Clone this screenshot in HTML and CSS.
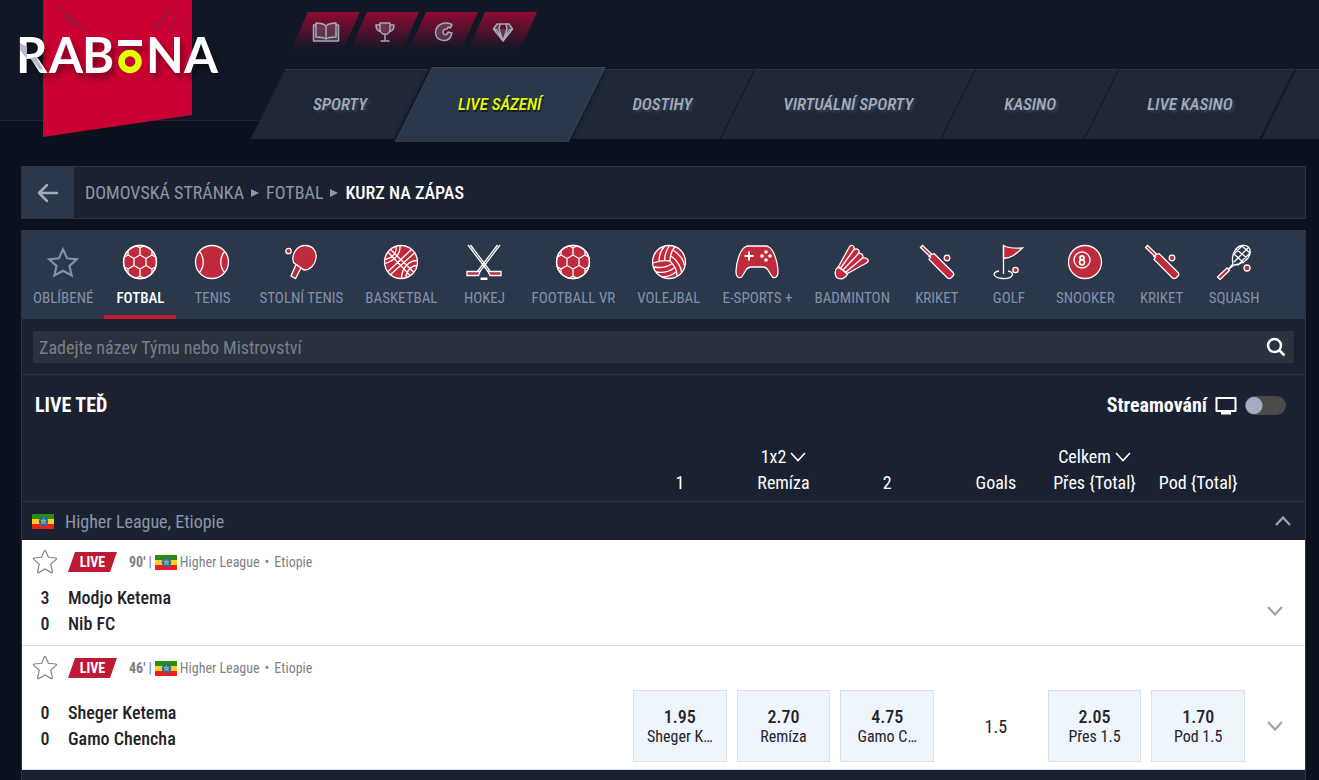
FILE: index.html
```html
<!DOCTYPE html>
<html lang="cs">
<head>
<meta charset="utf-8">
<meta name="viewport" content="width=device-width, initial-scale=1">
<title>Rabona – Live sázení</title>
<link rel="stylesheet" href="styles.css">
</head>
<body>
<svg class="sprite" aria-hidden="true">
  <symbol id="i-football" viewBox="0 0 36 36">
    <clipPath id="ball"><circle cx="18" cy="18" r="16.5"/></clipPath>
    <circle class="f" cx="18" cy="18" r="16.5"/>
    <path clip-path="url(#ball)" d="M18 11l6 3.500v7l-6 3.500-6-3.500v-7zM12 14.500L6 11V4l6-3.500L18 4v7M18 4l6-3.500L30 4v7l-6 3.500M30 11l6 3.500v7L30 25l-6-3.500M6 11l-6 3.500v7L6 25l6-3.500M6 25v7l6 3.500 6-3.500v-7M18 32l6 3.500 6-3.500v-7"/>
    <circle cx="18" cy="18" r="16.500"/>
  </symbol>
  <symbol id="i-tennis" viewBox="0 0 36 36">
    <circle class="f" cx="18" cy="18" r="16.500"/>
    <path d="M5.500 7.500c5 6 5 15 0 21M30.500 7.500c-5 6-5 15 0 21"/>
  </symbol>
  <symbol id="i-table" viewBox="0 0 36 36">
    <path class="f" d="M10.500 18.500C8 10 14 1.500 22 1.500c8 0 12 6 11 13C32 21 27 26 21 26zM13 20.500l5 3.500L12.500 34.500l-4.500-2.500z"/>
    <circle class="f" cx="5.500" cy="7" r="2.700"/>
  </symbol>
  <symbol id="i-basket" viewBox="0 0 36 36">
    <circle class="f" cx="18" cy="18" r="16.500"/>
    <path d="M5 8l22.500 24M7.500 5.500L31 28.500M31.500 9L7 31M28.500 5.500L4.500 28M13 2.500c1 6-3 11-11 13M17 1.500c1 8-5 15-15 18M34.500 16.500c-9 0-16 8-16 18M34 21.500c-6 0-11 6-11 12"/>
  </symbol>
  <symbol id="i-hockey" viewBox="0 0 36 36">
    <path d="M2 1l20 26.500M4.500 1L24 27M34 1L12 30M31.500 1L11 28"/>
    <path class="f" d="M22 27.500h13v4H24zM14 27.500H1v4h11.500z"/>
    <path class="p" d="M14.500 33.500h7V36h-7z"/>
  </symbol>
  <symbol id="i-volley" viewBox="0 0 36 36">
    <circle class="f" cx="18" cy="18" r="16.500"/>
    <path d="M19 17C19 11 21 6 24 2.500M13.500 17c0-6 2-11 5-15.500M8 18C8 11 11 5 13.500 2.500M2 19c6-2 12-3 17-2M19 17c4 4 7 10 7 15M20 12c6 4 10 11 10.500 16M22.500 6.500c6 4 10 9 11 15M2.500 23c6 1 12 1 18-3M5 28c7 1 13 0 18-4M11 33c6 0 10-2 14-5"/>
  </symbol>
  <symbol id="i-pad" viewBox="0 0 44 36">
    <path class="f" d="M10 3q1.500-1 3.500-1h17q2 0 3.500 1c5 3 9 16 9 24 0 8-5 8-7 4l-3-5c-2-3-3-3-5-3H16c-2 0-3 0-5 3l-3 5c-2 4-7 4-7-4C1 19 5 6 10 3z"/>
    <path class="w" d="M14 7.500v9M9.500 12h9"/>
    <circle class="p" cx="31" cy="8" r="1.800"/><circle class="p" cx="31" cy="16" r="1.800"/><circle class="p" cx="27" cy="12" r="1.800"/><circle class="p" cx="35" cy="12" r="1.800"/>
  </symbol>
  <symbol id="i-badminton" viewBox="0 0 36 36">
    <path class="f" d="M4.500 22.500L15 3.500c2-4 6-2 5 2 4-1.500 6 1 4.500 4 4-.5 5 2 4 4.500 5-1 7.500 3 4 5L13.500 29.500zM7 23.500L20 5.500M9.500 25.500l15-16M12 28l16.500-14"/>
    <path class="f" d="M4 23c-4 3-3 8-1.500 10.500C7 36.500 12 34 13.500 30zM4 23l9.500 7"/>
  </symbol>
  <symbol id="i-cricket" viewBox="0 0 36 36">
    <path class="f" d="M1.500 3.500l2-2 9.500 9 2-1L34 28.500q1.500 2 0 3.500l-2 2q-2 1-3.500 0L10 15.500l1.500-2.500z"/>
    <path d="M9.500 13l3-3"/>
    <circle class="f" cx="28" cy="14" r="2.800"/>
  </symbol>
  <symbol id="i-golf" viewBox="0 0 36 36">
    <path class="f" d="M12.500 1.500c5 3 11 3 19 2.500-5 4-9 10-19 10.500z"/>
    <path d="M12.500 1v29M8 27c-7 1-7 7 4 7.500 11 .5 12-6.500 5-7.500"/>
    <circle class="f" cx="24.500" cy="26" r="2.700"/>
  </symbol>
  <symbol id="i-snooker" viewBox="0 0 36 36">
    <circle class="f" cx="18" cy="18" r="16.500"/><circle cx="15" cy="16" r="8"/>
    <g stroke-width="1.700"><circle cx="15" cy="13.800" r="2"/><circle cx="15" cy="18.300" r="2.500"/></g>
  </symbol>
  <symbol id="i-squash" viewBox="0 0 36 36">
    <path d="M17 20c-2-9 2-17 9-18.500 6-1 9 3 8 8-1.500 7-9 11-16 11.500l-5 4M17 20l-4.500 5M18 10l10 9M20 5l12 10M26 2l8 7M32 4L18 18M26 2l-9 9M34 9L22 21"/>
    <path class="f" d="M11 24l2.500 2.500-9.500 9L1.500 33z"/><circle class="f" cx="31" cy="24" r="3"/>
  </symbol>
  <symbol id="i-star" viewBox="0 0 32 30">
    <path d="M16 3l3.800 8.500 9.200 1-6.900 6.200 2 9L16 23.200 7.900 27.700l2-9L3 12.500l9.200-1z"/>
  </symbol>
  <symbol id="i-starline" viewBox="0 0 26 26">
    <path d="M13 1.700q.8 0 1.100.9l2.300 5.700 7.300.7q1.400.3.500 1.400l-5.500 4.800 1.700 7.500q.1 1.500-1.200.9L13 19.900l-6.200 3.700q-1.300.6-1.200-.9l1.700-7.500-5.500-4.800Q.9 9.300 2.300 9l7.300-.7 2.300-5.700q.3-.9 1.100-.9z"/>
  </symbol>
  <symbol id="i-down" viewBox="0 0 16 10"><path d="M1 1l7 7.500L15 1"/></symbol>
  <symbol id="i-flag" viewBox="0 0 22 15">
    <path fill="#2c8c0c" d="M0 0h22v5H0z"/><path fill="#ffcf20" d="M0 5h22v5H0z"/><path fill="#f01f1c" d="M0 10h22v5H0z"/>
    <circle cx="11.500" cy="7.500" r="4.700" fill="#1b6cc0"/>
    <path d="M11.500 4.500l1.800 5.500-4.500-3.400h5.400L9.700 10z" fill="none" stroke="#e2cf42" stroke-width=".6"/>
  </symbol>
</svg>

<header class="header">
  <a class="logo" href="#" aria-label="Rabona">
    <svg width="240" height="140" viewBox="0 0 240 140">
      <path d="M43 0h149v115L43 137z" fill="#cb0032"/>
      <path d="M54 0l35 33-21-10zM51 10l15 24-8-13zM176 0l-25 31 8-2zM181 0l-15 38 8-12zM183 15l-3 25 3-10z" fill="#a3133b"/>
      <g class="logo-text">
        <text x="16" y="73">R</text><text x="49" y="73">A</text><text x="82" y="73">B</text>
        <text x="146" y="73">N</text><text x="184" y="73">A</text>
        <path d="M118 40h24v6h-24z"/>
      </g>
      <path d="M20 43l7 4v12l-7-9z" fill="#b9bcc8"/>
      <path d="M30 58l6-1 7 12-3 1z" fill="#b9bcc8"/>
      <circle cx="130" cy="61.500" r="8.500" fill="none" stroke="#e3ff00" stroke-width="6.500"/>
    </svg>
  </a>
  <div class="header-main">
    <div class="quick">
      <a href="#" aria-label="Pravidla"><svg width="28" height="22" viewBox="0 0 28 22"><path d="M4 4H1.500v16h25V4H24M14 5c-3-3-6-3-10-3v14c4 0 7 0 10 2 3-2 6-2 10-2V2c-4 0-7 0-10 3zM14 5v13"/></svg></a>
      <a href="#" aria-label="Turnaje"><svg width="22" height="22" viewBox="0 0 22 22"><path d="M6 2h10v6c0 7-10 7-10 0zM6 4H2c0 4 1 6 4.500 6.500M16 4h4c0 4-1 6-4.500 6.500M11 13.500V20M6.500 20h9"/></svg></a>
      <a href="#" aria-label="Bonusy"><svg width="22" height="22" viewBox="0 0 22 22"><path d="M18 3C11 0 3 4 2.500 11c0 9 11 11 15 5l1.500-4-4-1c-1 4-5 3-5 0 0-2 2-3 4-3l1-2 2 1 2-3z"/></svg></a>
      <a href="#" aria-label="VIP"><svg width="22" height="22" viewBox="0 0 22 22"><path d="M5 3h12l3.500 5L11 20 1.500 8zM8 3l-1 5 4 12 4-12-1-5M1.500 8L5 9 11 20l6-11 3.500-1"/></svg></a>
    </div>
    <nav class="nav" aria-label="Hlavní">
      <a href="#"><span>SPORTY</span></a>
      <a href="#" class="active" aria-current="page"><span>LIVE SÁZENÍ</span></a>
      <a href="#"><span>DOSTIHY</span></a>
      <a href="#"><span>VIRTUÁLNÍ SPORTY</span></a>
      <a href="#"><span>KASINO</span></a>
      <a href="#"><span>LIVE KASINO</span></a>
      <i class="nav-rest"></i>
    </nav>
  </div>
</header>

<main class="main">
  <div class="crumbs">
    <button class="back" aria-label="Zpět"><svg width="22" height="20" viewBox="0 0 22 20"><path d="M10 2l-8 8 8 8M2 10h18"/></svg></button>
    <nav class="crumb-list" aria-label="Drobečková navigace">
      <a href="#">DOMOVSKÁ STRÁNKA</a><i class="tri"></i><a href="#">FOTBAL</a><i class="tri"></i><strong>KURZ NA ZÁPAS</strong>
    </nav>
  </div>

  <section class="panel">
    <nav class="sports" aria-label="Sporty">
      <a href="#"><svg class="ic fav"><use href="#i-star"/></svg>OBLÍBENÉ</a>
      <a href="#" class="on"><svg class="ic"><use href="#i-football"/></svg>FOTBAL</a>
      <a href="#"><svg class="ic"><use href="#i-tennis"/></svg>TENIS</a>
      <a href="#"><svg class="ic"><use href="#i-table"/></svg>STOLNÍ TENIS</a>
      <a href="#"><svg class="ic"><use href="#i-basket"/></svg>BASKETBAL</a>
      <a href="#"><svg class="ic"><use href="#i-hockey"/></svg>HOKEJ</a>
      <a href="#"><svg class="ic"><use href="#i-football"/></svg>FOOTBALL VR</a>
      <a href="#"><svg class="ic"><use href="#i-volley"/></svg>VOLEJBAL</a>
      <a href="#"><svg class="ic wide"><use href="#i-pad"/></svg>E-SPORTS +</a>
      <a href="#"><svg class="ic"><use href="#i-badminton"/></svg>BADMINTON</a>
      <a href="#"><svg class="ic"><use href="#i-cricket"/></svg>KRIKET</a>
      <a href="#"><svg class="ic"><use href="#i-golf"/></svg>GOLF</a>
      <a href="#"><svg class="ic"><use href="#i-snooker"/></svg>SNOOKER</a>
      <a href="#"><svg class="ic"><use href="#i-cricket"/></svg>KRIKET</a>
      <a href="#"><svg class="ic"><use href="#i-squash"/></svg>SQUASH</a>
    </nav>
    <form class="search">
      <input type="text" aria-label="Hledat" placeholder="Zadejte název Týmu nebo Mistrovství">
      <button type="button" aria-label="Hledat"><svg width="20" height="20" viewBox="0 0 20 20"><circle cx="8.500" cy="8.500" r="6.500"/><path d="M13.500 13.500L18.500 18.500"/></svg></button>
    </form>

    <div class="title">
      <h1>LIVE TEĎ</h1>
      <label class="stream">Streamování
        <svg width="22" height="19" viewBox="0 0 22 19"><path d="M1.500 2h19v13h-19z"/><path d="M6 15h10v3.500H6z" class="p"/></svg>
        <input type="checkbox" role="switch">
      </label>
    </div>

    <div class="row cols">
      <div></div>
      <div class="odds heads">
        <span class="c2"><button>1x2 <svg class="dn"><use href="#i-down"/></svg></button></span>
        <span class="c5"><button>Celkem <svg class="dn"><use href="#i-down"/></svg></button></span>
        <span class="c1">1</span><span>Remíza</span><span>2</span><span class="goals">Goals</span><span>Přes {Total}</span><span>Pod {Total}</span>
      </div>
    </div>

    <div class="league">
      <svg class="flag"><use href="#i-flag"/></svg>
      <h2>Higher League, Etiopie</h2>
      <button aria-label="Sbalit"><svg class="chev up"><use href="#i-down"/></svg></button>
    </div>

    <article class="match">
      <div class="meta">
        <button class="star" aria-label="Přidat k oblíbeným"><svg><use href="#i-starline"/></svg></button>
        <span class="live">LIVE</span>
        <span class="info"><b>90'</b> | <svg class="flag"><use href="#i-flag"/></svg> Higher League <span class="dot">•</span> Etiopie</span>
      </div>
      <div class="row">
        <div class="teams"><b>3</b><strong>Modjo Ketema</strong><b>0</b><strong>Nib FC</strong></div>
        <button class="more" aria-label="Více"><svg class="chev"><use href="#i-down"/></svg></button>
      </div>
    </article>

    <article class="match">
      <div class="meta">
        <button class="star" aria-label="Přidat k oblíbeným"><svg><use href="#i-starline"/></svg></button>
        <span class="live">LIVE</span>
        <span class="info"><b>46'</b> | <svg class="flag"><use href="#i-flag"/></svg> Higher League <span class="dot">•</span> Etiopie</span>
      </div>
      <div class="row">
        <div class="teams"><b>0</b><strong>Sheger Ketema</strong><b>0</b><strong>Gamo Chencha</strong></div>
        <div class="odds">
          <button class="odd"><b>1.95</b><span>Sheger K…</span></button>
          <button class="odd"><b>2.70</b><span>Remíza</span></button>
          <button class="odd"><b>4.75</b><span>Gamo C…</span></button>
          <span class="goals">1.5</span>
          <button class="odd"><b>2.05</b><span>Přes 1.5</span></button>
          <button class="odd"><b>1.70</b><span>Pod 1.5</span></button>
        </div>
        <button class="more" aria-label="Více"><svg class="chev"><use href="#i-down"/></svg></button>
      </div>
    </article>
  </section>
</main>
</body>
</html>
```
FILE: styles.css
```css
* { box-sizing: border-box; }

body {
  margin: 0;
  min-height: 100vh;
  display: flex;
  flex-direction: column;
  background: #0b111f;
  color: #fff;
  font-family: "Roboto Condensed", Roboto, "Liberation Sans", sans-serif;
  font-size: 18px;
  overflow-x: hidden;
}

a { color: inherit; text-decoration: none; }
button { font: inherit; color: inherit; background: none; border: 0; padding: 0; cursor: pointer; }
svg { display: block; }
.sprite { position: absolute; width: 0; height: 0; }

/* Header */
.header {
  display: flex;
  overflow: hidden;
  background: linear-gradient(#101726 120px, #1b2433 120px 121px, #0b111f 121px);
}
.logo { flex: none; }
.logo-text {
  fill: #fff;
  font-family: Lato, sans-serif;
  font-size: 49px;
  font-weight: 700;
  filter: drop-shadow(3px 5px 3px rgba(0, 0, 0, .4));
}
.header-main { flex: 1; min-width: 0; padding: 12px 0 27px 28px; }

.quick { display: flex; padding-left: 23px; margin-bottom: 19px; }
.quick a {
  width: 69px;
  height: 38px;
  margin-right: -10px;
  padding-top: 2px;
  display: grid;
  place-items: center;
  background: linear-gradient(#8f0a32, #101726);
  clip-path: polygon(17px 0, 100% 0, calc(100% - 17px) 100%, 0 100%);
}
.quick svg { fill: rgba(160, 165, 185, .25); stroke: #a5a9ba; stroke-width: 1.5; stroke-linejoin: round; }

.nav { display: flex; height: 70px; color: #a4acbc; font-size: 17px; font-style: italic; font-weight: 500; }
.nav a, .nav-rest { position: relative; display: grid; place-items: center; padding: 0 46px 0 45px; white-space: nowrap; }
.nav a::before, .nav-rest::before {
  content: "";
  position: absolute;
  inset: 0;
  transform: skewX(-26.5deg);
  background: #1f2636;
  border-top: 1px solid #2b3545;
  border-right: 1px solid #0c1423;
}
.nav-rest { flex: 1; padding: 0; }
.nav-rest::before { right: -60px; }
.nav span { position: relative; text-shadow: 2px 2px 3px rgba(120, 140, 165, .35); }
.nav .active { color: #e3ff00; z-index: 1; }
.nav .active::before { inset: -2px 0 -3px; background: #2b384b; border-color: #36465a; box-shadow: 0 0 4px #0b111f; }
.nav .active span { text-shadow: 1px 2px 1px rgba(0, 0, 0, .6); }

/* Page body */
.main { flex: 1; display: flex; flex-direction: column; padding: 0 13px 0 21px; }

.crumbs { display: flex; height: 53px; margin-bottom: 11px; background: #1a2231; border: 1px solid #2a3546; }
.back { width: 52px; display: grid; place-items: center; background: #2b374a; }
.back svg { fill: none; stroke: #a3abbd; stroke-width: 2.5; stroke-linecap: round; stroke-linejoin: round; }
.crumb-list { display: flex; align-items: center; gap: 7px; padding-left: 11px; color: #8b95ab; }
.crumb-list strong { color: #fff; font-weight: 500; }
.tri { border-left: 8px solid #8b95ab; border-top: 4px solid transparent; border-bottom: 4px solid transparent; }

.panel { flex: 1; background: #1a2231; border: 1px solid #2a3546; border-bottom: 0; }

.sports { display: flex; height: 88px; background: #2b374a; color: #8491aa; font-size: 15px; overflow: hidden; }
.sports a {
  min-width: 72px;
  padding: 13px 11px 0;
  display: flex;
  flex-direction: column;
  align-items: center;
  gap: 9px;
  line-height: 18px;
  white-space: nowrap;
  border-bottom: 4px solid transparent;
}
.sports .on { color: #fff; font-weight: 500; border-color: #bd1a36; }
.ic { width: 36px; height: 36px; overflow: visible; fill: none; stroke: #fff; stroke-width: 1.3; }
.ic.wide { width: 44px; }
.ic.fav { stroke: #8491aa; stroke-width: 2; padding: 1px; }
.f { fill: #bf2a3c; }
.p { fill: #fff; stroke: none; }
.w { stroke-width: 2; }

.search { display: flex; margin: 12px 11px 11px; height: 32px; background: #2a3240; border-radius: 2px; }
.search input { flex: 1; min-width: 0; padding: 0 6px; border: 0; background: none; color: #fff; font: inherit; }
.search input::placeholder { color: #7a7f88; opacity: 1; }
.search button { width: 36px; display: grid; place-items: center; }
.search svg { fill: none; stroke: #fff; stroke-width: 2.5; }

.title {
  display: flex;
  align-items: center;
  justify-content: space-between;
  height: 61px;
  padding: 0 19px 0 13px;
  border-top: 1px solid #2a3546;
}
.title h1 { margin: 0; font-size: 20px; font-weight: 700; }
.stream { display: flex; align-items: center; gap: 8px; font-size: 20px; font-weight: 700; }
.stream svg { fill: none; stroke: #fff; stroke-width: 2; stroke-linejoin: round; }
.stream input {
  appearance: none;
  width: 41px;
  height: 19px;
  margin: 0;
  border-radius: 10px;
  background: radial-gradient(circle at 9px 50%, #a5abc0 8px, transparent 9px) #4a4a4a;
}

/* Market grid */
.row { display: flex; align-items: center; }
.row > :first-child { flex: 1; min-width: 0; }
.odds { flex: none; width: 612px; display: grid; grid-template-columns: repeat(6, minmax(0, 1fr)); column-gap: 10px; }
.goals { padding-left: 10px; text-align: center; }

.cols { padding: 9px 60px 5px 0; }
.heads { line-height: 26px; text-align: center; white-space: nowrap; }
.heads .c1 { grid-column: 1; }
.heads .c2 { grid-column: 2; }
.heads .c5 { grid-column: 5; }
.heads button { display: flex; align-items: center; gap: 4px; margin: 0 auto; }
.dn { width: 16px; height: 10px; fill: none; stroke: #fff; stroke-width: 1.6; }

.league { display: flex; align-items: center; height: 39px; padding: 0 14px 0 10px; border-top: 1px solid #2a3546; color: #8b95ab; }
.league h2 { flex: 1; margin: 0 0 0 11px; font-size: 18px; font-weight: 400; }
.flag { width: 22px; height: 15px; }
.chev { width: 16px; height: 10px; fill: none; stroke: #9aa3b3; stroke-width: 2.2; }
.up { transform: rotate(180deg); }

.match { background: #fff; color: #222328; border-bottom: 1px solid #dcdfea; }
.match .row { padding-bottom: 7px; }
.meta { display: flex; align-items: center; height: 44px; padding-left: 10px; color: #7b8288; font-size: 14px; }
.star svg { width: 26px; height: 26px; fill: none; stroke: #7b8794; stroke-width: 1.2; }
.live {
  width: 49px;
  margin: 0 12px 0 10px;
  line-height: 20px;
  text-align: center;
  background: #bd1a36;
  color: #fff;
  font-weight: 700;
  clip-path: polygon(7px 0, 100% 0, calc(100% - 7px) 100%, 0 100%);
}
.info { display: flex; align-items: center; gap: 3px; }
.info .dot { margin: 0 2px; }
.teams {
  display: grid;
  grid-template-columns: 46px 1fr;
  padding: 1px 0;
  line-height: 26px;
}
.teams b { text-align: center; font-weight: 500; }
.teams strong { font-weight: 500; }
.more { width: 60px; display: grid; place-items: center; }
.odds .goals { align-self: center; }
.odd {
  height: 72px;
  padding: 2px 10px 0;
  background: #eff5fd;
  border: 1px solid #d9e0ec;
  font-size: 16px;
  line-height: 20px;
}
.odd b { display: block; font-weight: 500; font-size: 18px; }
.odd span { display: block; overflow: hidden; text-overflow: ellipsis; white-space: nowrap; }
```
